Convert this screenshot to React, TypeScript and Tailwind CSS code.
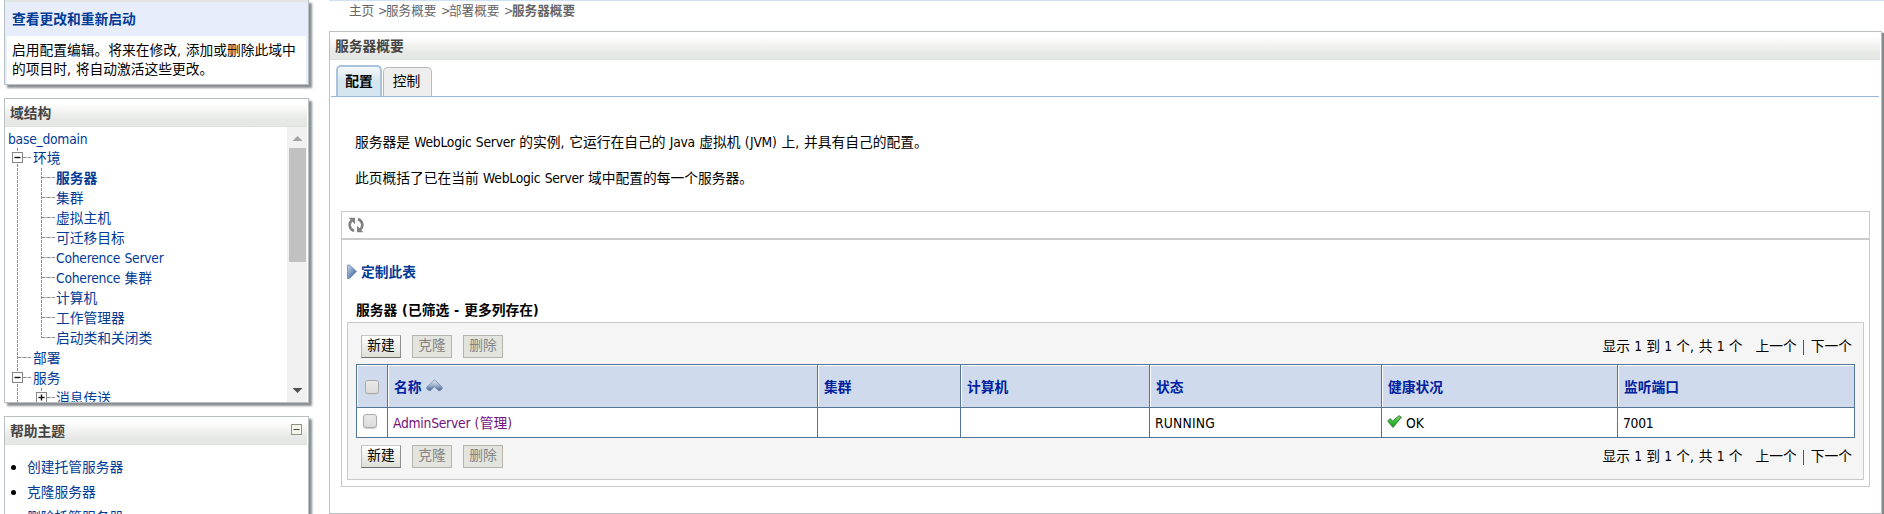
import React from "react";

const FONT =
  "font-['DejaVu_Sans_Condensed','Noto_Sans_CJK_SC',sans-serif]";

/** Latin words are set slightly tighter, and Latin punctuation slightly wider, than the Chinese text. */
function T({ children }: { children: string }) {
  return (
    <span className="whitespace-pre [word-spacing:0.4px]">
      {children.split(/([\w]+|[,()-]+)/).map((part, i) =>
        i % 2 ? (
          <span key={i} className={/\w/.test(part) ? "tracking-[-0.25px]" : "tracking-[0.4px]"}>
            {part}
          </span>
        ) : (
          part
        ),
      )}
    </span>
  );
}

type Node = {
  label: string;
  depth: 1 | 2;
  box?: "plus" | "minus";
  bold?: boolean;
  last?: boolean;
};

const tree: Node[] = [
  { label: "环境", depth: 1, box: "minus" },
  { label: "服务器", depth: 2, bold: true },
  { label: "集群", depth: 2 },
  { label: "虚拟主机", depth: 2 },
  { label: "可迁移目标", depth: 2 },
  { label: "Coherence Server", depth: 2 },
  { label: "Coherence 集群", depth: 2 },
  { label: "计算机", depth: 2 },
  { label: "工作管理器", depth: 2 },
  { label: "启动类和关闭类", depth: 2, last: true },
  { label: "部署", depth: 1 },
  { label: "服务", depth: 1, box: "minus" },
  { label: "消息传送", depth: 2, box: "plus" },
];

function Gutter({ node }: { node: Node }) {
  const w = node.depth === 1 ? 28 : 51;
  const x = node.depth === 1 ? 12.5 : 36.5;
  return (
    <svg width={w} height="20" viewBox={`0 0 ${w} 20`} className="shrink-0" fill="none" stroke="#8f8f8f">
      <path d="M12.5 0V20" strokeDasharray="3 1" />
      {node.depth === 2 && <path d={`M36.5 0V${node.last ? 10 : 20}`} strokeDasharray="3 1" />}
      <path d={`M${x} 9.5H${node.depth === 1 ? 26 : 50}`} strokeDasharray="4 1" />
      {node.box && (
        <>
          <rect x={x - 5} y="4.5" width="10" height="10" fill="#fff" stroke="#858585" />
          <path d={`M${x - 3} 9.5H${x + 3}`} stroke="#111" strokeWidth="1.4" />
          {node.box === "plus" && <path d={`M${x} 6.5V12.5`} stroke="#111" strokeWidth="1.4" />}
        </>
      )}
    </svg>
  );
}

function PanelHeader({ title, children }: { title: string; children?: React.ReactNode }) {
  return (
    <div className="mr-px flex h-7 shrink-0 items-center justify-between border-b border-[#dedfde] bg-linear-to-b from-white from-15% to-[#e6e8e5] to-80% pl-[5px] pr-1 font-bold text-[#444]">
      <span>{title}</span>
      {children}
    </div>
  );
}

const panel = "flex w-[305px] flex-col border border-[#b7c0c5] bg-white shadow-[3px_3px_2px_#8b8f92]";

function Sidebar() {
  return (
    <aside className="flex w-[329px] shrink-0 flex-col pl-1">
      <section className="flex h-[85px] w-[305px] shrink-0 flex-col border border-t-0 border-[#b7c0c5] bg-[#e7edfb] shadow-[3px_3px_2px_#8b8f92]">
        <div className="h-[2px] bg-[#e3e5e3]" />
        <div className="flex h-[34px] items-center pl-[7px] font-bold text-[#003b96]">查看更改和重新启动</div>
        <div className="mx-[2px] flex-1 bg-white pl-[5px] pt-[5px] leading-[19px]">
          <T>启用配置编辑。将来在修改, 添加或删除此域中</T>
          <br />
          <T>的项目时, 将自动激活这些更改。</T>
        </div>
      </section>

      <section className={`${panel} mt-[13px] h-[305px] shrink-0`}>
        <PanelHeader title="域结构" />
        <div className="flex min-h-0 flex-1 text-[#003b96]">
          <div className="flex-1 overflow-hidden">
            <div className="flex h-[21px] items-center pl-[3px] pt-[3px] tracking-[0.1px]">
              <T>base_domain</T>
            </div>
            {tree.map((n) => (
              <div key={n.label} className="flex h-5 items-center">
                <Gutter node={n} />
                <span className={n.bold ? "font-bold" : ""}>
                  <T>{n.label}</T>
                </span>
              </div>
            ))}
          </div>
          <div className="mr-px flex w-5 flex-col items-center bg-[#f1f1f1]">
            <svg width="20" height="21" viewBox="0 0 20 21">
              <path d="M5.5 14L10.5 9L15.5 14Z" fill="#a3a3a3" />
            </svg>
            <div className="h-[114px] w-[17px] bg-[#c1c1c1]" />
            <div className="flex-1" />
            <svg width="20" height="21" viewBox="0 0 20 21">
              <path d="M5.5 7L10.5 12L15.5 7Z" fill="#505050" />
            </svg>
          </div>
        </div>
      </section>

      <section className={`${panel} mt-[13px] h-[140px] shrink-0`}>
        <PanelHeader title="帮助主题">
          <svg width="11" height="11" viewBox="0 0 11 11" className="mb-[3px] mr-[1px]">
            <rect x="0.5" y="0.5" width="10" height="10" fill="#f3f5ec" stroke="#8c9485" />
            <path d="M2.5 5.5H8.5" stroke="#444" />
          </svg>
        </PanelHeader>
        <ul className="flex flex-col pt-[9px] text-[#003b96]">
          {["创建托管服务器", "克隆服务器", "删除托管服务器"].map((t) => (
            <li key={t} className="flex h-[25px] items-center pl-[6px]">
              <span className="mr-[11px] mt-[2px] size-[5px] rounded-full bg-black" />
              {t}
            </li>
          ))}
        </ul>
      </section>
    </aside>
  );
}

function Buttons() {
  const off = "h-[23px] w-10 border border-[#b5b5ad] bg-[#e3e4dd] text-[#848484] leading-[19px]";
  return (
    <div className="flex gap-[11px] text-center">
      <div className="h-[23px] w-10 border border-b-[#6e6e6e] border-l-[#b9b9b9] border-r-[#8f8f8f] border-t-[#c9c9c9] bg-linear-to-b from-white to-[#dddfd6] leading-[19px] text-black">
        新建
      </div>
      <div className={off}>克隆</div>
      <div className={off}>删除</div>
    </div>
  );
}

function ControlRow() {
  return (
    <div className="flex h-[23px] items-center justify-between pl-[13px] pr-[11px]">
      <Buttons />
      <div className="flex items-center pb-[2px]">
        <span className="mr-[13px]">
          <T>显示 1 到 1 个, 共 1 个</T>
        </span>
        <span>上一个</span>
        <span className="ml-[6px] mr-[7px] mt-[4px] h-[15px] w-px bg-[#555]" />
        <span>下一个</span>
      </div>
    </div>
  );
}

function Checkbox() {
  return (
    <span className="block size-[14px] rounded-[3px] border border-[#a9a9a9] bg-linear-to-b from-[#e9e9e9] to-[#dcdcdc] shadow-[0_1px_1px_#d0d0d0]" />
  );
}

const GRID = "grid grid-cols-[31px_430px_143px_189px_232px_236px_237px]";

function ServerTable() {
  const cell = "flex items-center border-l border-[#557596]";
  return (
    <div className="ml-2 w-[1499px] border-b border-r border-[#557596] bg-white">
      <div className={`${GRID} h-[43px] border-t border-[#557596] font-bold text-[#00209f]`}>
        <div className={cell}>
          <div className="flex h-full w-full items-center border-l border-t border-white bg-[#cfdbec] pl-[7px]">
            <Checkbox />
          </div>
        </div>
        {["名称", "集群", "计算机", "状态", "健康状况", "监听端口"].map((h, i) => (
          <div key={h} className={cell}>
            <div className="flex h-full w-full items-center border-l border-t border-white bg-[#cfdbec] pl-[5px]">
              {h}
              {i === 0 && (
                <svg width="17" height="13" viewBox="0 0 17 13" className="ml-[4px] mb-[2px]">
                  <defs>
                    <linearGradient id="sort" x1="0" y1="0" x2="0" y2="1">
                      <stop offset="0.1" stopColor="#dbe4ef" />
                      <stop offset="0.5" stopColor="#a3b6d0" />
                      <stop offset="1" stopColor="#3f6090" />
                    </linearGradient>
                  </defs>
                  <path
                    d="M8.5 0.8L16.3 8.3V9.8L14 11.6H12.4L8.5 7.6L4.6 11.6H3L0.7 9.8V8.3Z"
                    fill="url(#sort)"
                    stroke="#6c85a9"
                    strokeWidth="0.8"
                    strokeLinejoin="round"
                  />
                </svg>
              )}
            </div>
          </div>
        ))}
      </div>
      <div className={`${GRID} h-[30px] border-t border-[#557596]`}>
        <div className={`${cell} pb-[3px] pl-[6px]`}>
          <Checkbox />
        </div>
        <div className={`${cell} pl-[5px] pt-px text-[#74107a]`}>
          <T>AdminServer (管理)</T>
        </div>
        <div className={cell} />
        <div className={cell} />
        <div className={`${cell} pl-[5px] pt-px tracking-[0.2px]`}>RUNNING</div>
        <div className={`${cell} pl-[5px] pt-px`}>
          <svg width="15" height="13" viewBox="0 0 15 13" className="mb-[4px] mr-[4px]">
            <defs>
              <linearGradient id="ok" x1="0" y1="0" x2="0" y2="1">
                <stop offset="0" stopColor="#7fd67a" />
                <stop offset="0.5" stopColor="#35c035" />
                <stop offset="1" stopColor="#169a1c" />
              </linearGradient>
            </defs>
            <path
              d="M0.7 6L3 3.6L5.7 6L12 0.7L14.4 2.2L6 12.4Z"
              fill="url(#ok)"
              stroke="#3c7a40"
              strokeWidth="1"
              strokeLinejoin="round"
            />
          </svg>
          OK
        </div>
        <div className={`${cell} pl-[5px] pt-px`}>
          <T>7001</T>
        </div>
      </div>
    </div>
  );
}

function Main() {
  return (
    <main className="flex min-w-0 flex-1 flex-col border-t border-[#cfe2f5]">
      <nav className="flex h-[30px] pl-5 text-[12.6px] leading-[20px] text-[#666]">
        <span className="w-[29px]">主页</span>
        <span className="w-[8px]">&gt;</span>
        <span className="w-[55px]">服务概要</span>
        <span className="w-[8px]">&gt;</span>
        <span className="w-[55px]">部署概要</span>
        <span className="w-[8px]">&gt;</span>
        <span className="font-bold">服务器概要</span>
      </nav>

      <section className="mr-[2px] flex h-[483px] flex-col border border-[#b9c0c4] bg-white shadow-[2px_2px_1px_#858a8d]">
        <PanelHeader title="服务器概要" />
        <div className="ml-px mr-[2px] flex h-[37px] shrink-0 items-end border-b border-[#96b8d6] pl-[5px]">
          <div className="flex h-[31px] w-[46px] items-center justify-center rounded-t-[5px] border-2 border-b-0 border-[#abc3da] bg-linear-to-b from-[#f3f8fb] to-[#d6e6f0] to-50% pb-[2px] font-bold">
            配置
          </div>
          <div className="ml-px flex h-[29px] w-[49px] items-center justify-center rounded-t-[5px] border border-b-0 border-[#b9b9b9] bg-[#eeeeee] pb-[2px] pr-[2px]">
            控制
          </div>
        </div>

        <div className="pl-[25px] pt-[27px] leading-9">
          <p>
            <T>服务器是 WebLogic Server 的实例, 它运行在自己的 Java 虚拟机 (JVM) 上, 并具有自己的配置。</T>
          </p>
          <p>
            <T>此页概括了已在当前 WebLogic Server 域中配置的每一个服务器。</T>
          </p>
        </div>

        <div className="ml-[11px] mt-[15px] flex h-[276px] w-[1529px] shrink-0 flex-col border border-[#cacaca]">
          <div className="flex h-7 shrink-0 items-center border-b-2 border-[#cacaca] pl-[6px]">
            <svg width="16" height="16" viewBox="0 0 16 16" fill="none" stroke="#808080" strokeWidth="2.6">
              <path d="M6 14C0.8 11.8 0.4 6 4 3.4" />
              <path d="M0.6 0.8H7V7.2Z" fill="#808080" stroke="none" />
              <path d="M10 2C15.2 4.2 15.6 10 12 12.6" />
              <path d="M15.4 15.2H9V8.8Z" fill="#808080" stroke="none" />
            </svg>
          </div>
          <div className="mt-[21px] flex h-[21px] shrink-0 items-center pl-[5px] font-bold text-[#003b96]">
            <svg width="11" height="16" viewBox="0 0 11 16" className="mr-[3px]">
              <defs>
                <linearGradient id="tri" x1="0" y1="0" x2="1" y2="1">
                  <stop offset="0" stopColor="#c3d5ee" />
                  <stop offset="1" stopColor="#2f5690" />
                </linearGradient>
              </defs>
              <path d="M0.5 1H2.5L9.5 7.5L2.5 14.5H0.5Z" fill="url(#tri)" stroke="#6e8ab3" strokeWidth="0.8" />
            </svg>
            定制此表
          </div>
          <div className="mt-[17px] flex h-[23px] shrink-0 items-center pl-[14px] pb-px font-bold">
            <T>服务器 (已筛选 - 更多列存在)</T>
          </div>
          <div className="ml-[5px] flex h-[158px] w-[1517px] shrink-0 flex-col border border-[#cacaca] bg-[#f5f5f5] pt-[12px]">
            <ControlRow />
            <div className="h-[6px]" />
            <ServerTable />
            <div className="h-[7px]" />
            <ControlRow />
          </div>
        </div>
      </section>
    </main>
  );
}

export default function App() {
  return (
    <div className={`flex h-[514px] w-[1884px] overflow-hidden bg-white text-[13.75px] leading-5 text-black ${FONT}`}>
      <Sidebar />
      <Main />
    </div>
  );
}
